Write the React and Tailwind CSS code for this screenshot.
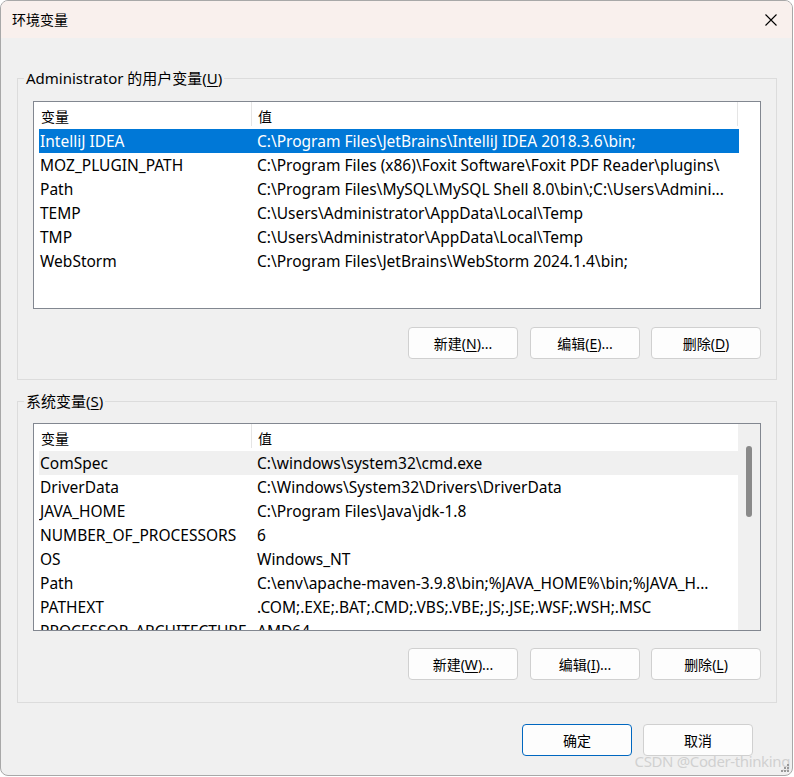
import React from 'react';

const font = { fontFamily: '"Noto Sans", "Noto Sans CJK SC", sans-serif' };

const userVars = [
  ['IntelliJ IDEA', 'C:\\Program Files\\JetBrains\\IntelliJ IDEA 2018.3.6\\bin;'],
  ['MOZ_PLUGIN_PATH', 'C:\\Program Files (x86)\\Foxit Software\\Foxit PDF Reader\\plugins\\'],
  ['Path', 'C:\\Program Files\\MySQL\\MySQL Shell 8.0\\bin\\;C:\\Users\\Admini...'],
  ['TEMP', 'C:\\Users\\Administrator\\AppData\\Local\\Temp'],
  ['TMP', 'C:\\Users\\Administrator\\AppData\\Local\\Temp'],
  ['WebStorm', 'C:\\Program Files\\JetBrains\\WebStorm 2024.1.4\\bin;'],
];

const sysVars = [
  ['ComSpec', 'C:\\windows\\system32\\cmd.exe'],
  ['DriverData', 'C:\\Windows\\System32\\Drivers\\DriverData'],
  ['JAVA_HOME', 'C:\\Program Files\\Java\\jdk-1.8'],
  ['NUMBER_OF_PROCESSORS', '6'],
  ['OS', 'Windows_NT'],
  ['Path', 'C:\\env\\apache-maven-3.9.8\\bin;%JAVA_HOME%\\bin;%JAVA_H...'],
  ['PATHEXT', '.COM;.EXE;.BAT;.CMD;.VBS;.VBE;.JS;.JSE;.WSF;.WSH;.MSC'],
  ['PROCESSOR_ARCHITECTURE', 'AMD64'],
];

// a button with one underlined access key
const Btn = ({ pre, k, post, className = '' }) => (
  <button className={`w-[110px] h-8 rounded-[4px] border border-[#d0d0d0] bg-[#fdfdfd] text-[14px] text-black flex items-center justify-center ${className}`}>
    {pre}(<u className="underline-offset-2">{k}</u>){post}
  </button>
);

const VarList = ({ rows, selected, hovered, scroll }) => (
  <div className="h-[208px] border border-[#828790] bg-white flex overflow-hidden">
    <div className="flex-1 flex flex-col min-w-0">
      {/* Header */}
      <div className="h-[25px] flex items-stretch shrink-0">
        <div className="w-[217px] pl-[7px] pt-[3px] flex items-center text-[14px]">变量</div>
        <div className="w-px bg-[#e5e5e5] h-[24px]" />
        <div className="flex-1 pl-[6px] pt-[3px] flex items-center text-[14px]">值</div>
        {!scroll && <div className="w-px bg-[#e5e5e5] h-[24px]" />}
        {!scroll && <div className="w-[22px]" />}
      </div>
      {/* Rows */}
      <div className="mt-[2px] pl-[5px] flex flex-col">
        {rows.map(([name, value], i) => (
          <div
            key={name + i}
            className={`h-6 w-[700px] shrink-0 flex items-center pt-px text-[15.5px] whitespace-nowrap ${
              i === selected ? 'bg-[#0078d7] text-white' : i === hovered ? 'bg-[#f0f0f0] text-black' : 'text-black'
            }`}
          >
            <div className="w-[212px] pl-[1px] overflow-hidden">{name}</div>
            <div className="flex-1 pl-[6px] overflow-hidden">{value}</div>
          </div>
        ))}
      </div>
    </div>
    {scroll && (
      <div className="w-[22px] bg-[#f0f0f0] flex justify-center pt-[22px]">
        <div className="w-[6px] h-[71px] rounded-[3px] bg-[#8a8a8a]" />
      </div>
    )}
  </div>
);

const Group = ({ label, k, children, className = '' }) => (
  <fieldset className={`min-w-0 border border-[#dcdcdc] ml-[16px] mr-[15px] px-[15px] ${className}`}>
    <legend className="ml-[-9px] px-[2px] text-[15px] leading-[20px] text-black">
      {label}(<u className="underline-offset-2">{k}</u>)
    </legend>
    {children}
  </fieldset>
);

export default function App() {
  return (
    <div className="w-[794px] h-[777px] bg-white" style={font}>
      <div className="relative w-[793px] h-[776px] border border-[#a8a8a8] rounded-[8px] overflow-hidden bg-[#f0f0f0] flex flex-col">
        {/* Title bar */}
        <div className="h-[37px] bg-[#f9f0ed] flex items-center justify-between pl-[11px] pr-[14px] shrink-0">
          <span className="text-[14px] text-black">环境变量</span>
          <svg width="14" height="14" viewBox="0 0 14 14" className="text-black">
            <path d="M1.5 1.5 L12.5 12.5 M12.5 1.5 L1.5 12.5" stroke="currentColor" strokeWidth="1.1" fill="none" />
          </svg>
        </div>

        {/* User variables */}
        <Group label="Administrator 的用户变量" k="U" className="mt-[30px] pb-[20px]">
          <div className="mt-[13px]">
            <VarList rows={userVars} selected={0} />
          </div>
          <div className="mt-[18px] flex justify-end">
            <Btn pre="新建" k="N" post="..." />
            <Btn pre="编辑" k="E" post="..." className="ml-[12px]" />
            <Btn pre="删除" k="D" post="" className="ml-[11px]" />
          </div>
        </Group>

        {/* System variables */}
        <Group label="系统变量" k="S" className="mt-[11px] pb-[22px]">
          <div className="mt-[12px]">
            <VarList rows={sysVars} hovered={0} scroll />
          </div>
          <div className="mt-[17px] flex justify-end">
            <Btn pre="新建" k="W" post="..." />
            <Btn pre="编辑" k="I" post="..." className="ml-[12px]" />
            <Btn pre="删除" k="L" post="" className="ml-[11px]" />
          </div>
        </Group>

        {/* Dialog buttons */}
        <div className="mt-[21px] pr-[39px] flex justify-end">
          <button className="w-[110px] h-8 rounded-[4px] border border-[#0067c0] bg-[#fdfdfd] text-[14px] text-black">确定</button>
          <button className="w-[110px] h-8 ml-[11px] rounded-[4px] border border-[#d0d0d0] bg-[#fdfdfd] text-[14px] text-black">取消</button>
        </div>

        {/* Watermark + grip */}
        <span className="absolute right-[2px] bottom-[3px] text-[15px] text-[#d0d0d0] tracking-tight">CSDN @Coder-thinking</span>
        <svg className="absolute right-[2px] bottom-[2px]" width="10" height="10" viewBox="0 0 10 10">
          <rect x="7" y="1" width="2" height="2" fill="#9a9a9a" />
          <rect x="4" y="4" width="2" height="2" fill="#9a9a9a" />
          <rect x="7" y="4" width="2" height="2" fill="#9a9a9a" />
          <rect x="1" y="7" width="2" height="2" fill="#9a9a9a" />
          <rect x="4" y="7" width="2" height="2" fill="#9a9a9a" />
          <rect x="7" y="7" width="2" height="2" fill="#9a9a9a" />
        </svg>
      </div>
    </div>
  );
}
